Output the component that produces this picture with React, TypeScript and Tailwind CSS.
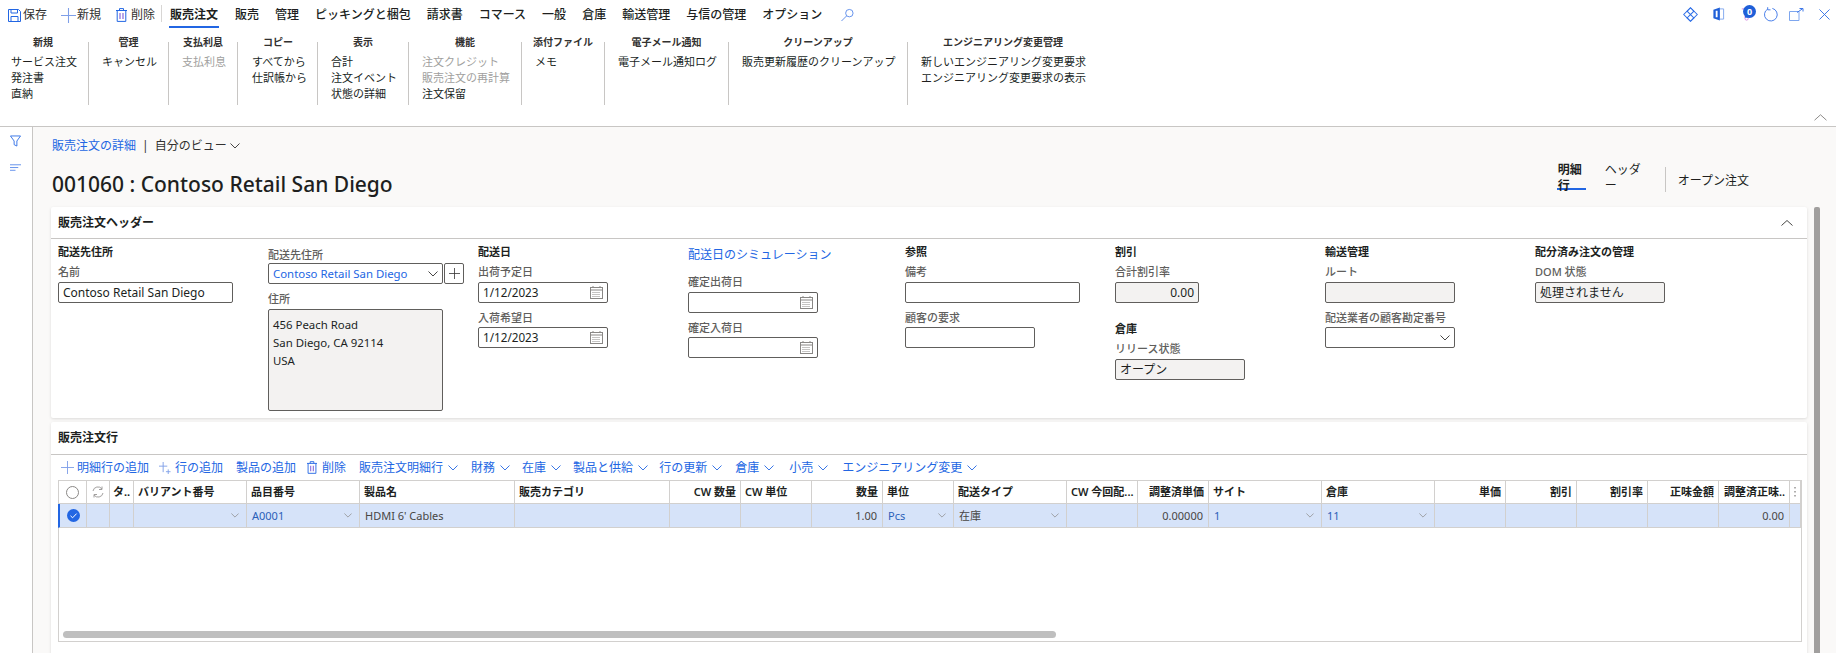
import React from "react";

const BLUE = "#2266e3";

function Chev({ className = "w-[10px] h-[6px]", color = "#323130" }: { className?: string; color?: string }) {
  return (
    <svg viewBox="0 0 10 6" className={className} fill="none">
      <polyline points="0.5,0.5 5,5 9.5,0.5" stroke={color} strokeWidth="0.9" />
    </svg>
  );
}

function Plus({ className, color = "#7f9fe8" }: { className: string; color?: string }) {
  return (
    <svg viewBox="0 0 14 14" className={className} fill="none">
      <path d="M7 0V14M0 7H14" stroke={color} strokeWidth="1" />
    </svg>
  );
}

function Trash({ className }: { className: string }) {
  return (
    <svg viewBox="0 0 11 14" className={className} fill="none" stroke={BLUE} strokeWidth="1">
      <path d="M0 2.5H11M3.5 2.5V.6H7.5V2.5M1.2 2.5V13.4H9.8V2.5" />
      <path d="M4 5V11M7 5V11" stroke="#9a7fe0" strokeWidth="1.4" />
    </svg>
  );
}

function Calendar() {
  return (
    <svg viewBox="0 0 13 13" className="w-[13px] h-[13px] shrink-0" fill="none" stroke="#8a8886" strokeWidth="1">
      <rect x="0.5" y="1.5" width="12" height="11" />
      <path d="M0.5 4H12.5M3 0V2M10 0V2" />
      <path d="M2.5 6.5H10.5M2.5 8.5H10.5M2.5 10.5H10.5" strokeDasharray="1 1" />
    </svg>
  );
}

const tabs = ["販売", "管理", "ピッキングと梱包", "請求書", "コマース", "一般", "倉庫", "輸送管理", "与信の管理", "オプション"];

function TopBar() {
  return (
    <div className="h-[31px] flex items-start text-[12px] leading-4 text-[#201f1e]">
      <div className="flex items-center h-[31px] pb-[1px] pl-[8px] w-[161px] text-[#323130]">
        <svg viewBox="0 0 13 13" className="w-[13px] h-[13px]" fill="none" stroke={BLUE} strokeWidth="1">
          <path d="M.5.5H10.5L12.5 2.5V12.5H.5Z" />
          <path d="M3 .5V4H9.5V.5M3 12.5V7.5H10V12.5" />
        </svg>
        <span className="ml-[2px]">保存</span>
        <Plus className="w-[15px] h-[15px] ml-[14px]" />
        <span className="ml-[1px]">新規</span>
        <Trash className="w-[11px] h-[14px] ml-[15px]" />
        <span className="ml-[4px]">削除</span>
      </div>
      <div className="w-px h-[17px] mt-[5px] bg-[#d8d6d4]" />
      <div className="flex ml-[7px] gap-4 font-medium">
        <div className="h-[28px] w-[50px] px-px pt-[7px] border-b-2 border-[#2266e3] font-semibold">販売注文</div>
        {tabs.map((t) => (
          <div key={t} className="pt-[7px]">{t}</div>
        ))}
      </div>
      <svg viewBox="0 0 14 14" className="w-[13px] h-[14px] ml-[19px] mt-[8px]" fill="none" stroke="#5b8bea" strokeWidth="1">
        <circle cx="9" cy="5" r="4" />
        <path d="M6 8L.5 13.5" />
      </svg>
      <div className="ml-auto flex items-center h-[28px] mr-[6px]">
        <svg viewBox="0 0 16 16" className="w-[15px] h-[15px]" fill="none" stroke="#2f6fe6" strokeWidth="1.1">
          <path d="M8 .8L15.2 8L8 15.2L.8 8Z" />
          <path d="M8 .8L4.4 4.4L11.6 11.6L8 15.2M8 .8L11.6 4.4L4.4 11.6L8 15.2" />
        </svg>
        <svg viewBox="0 0 14 16" className="w-[13px] h-[16px] ml-[14px]" fill="none">
          <path d="M8.5 1L1.5 3.5V12.5L8.5 15Z" fill="#1f5fd8" />
          <path d="M5 4.5V11.5" stroke="#fff" strokeWidth="2" />
          <path d="M8.5 2.5H12.5V13.5H8.5" stroke="#7ea6ee" strokeWidth="1" />
        </svg>
        <div className="relative w-[15px] h-[18px] ml-[16px]">
          <svg viewBox="0 0 10 16" className="w-[8px] h-[15px] mt-[2px]" fill="none">
            <path d="M1 1H9V13A2 2 0 0 1 5 13V9" stroke="#d48ae0" strokeWidth="1.2" />
            <path d="M5 1H9V12H5Z" fill="#2266e3" />
          </svg>
          <span className="absolute top-0 left-[2px] w-[13px] h-[13px] rounded-full bg-[#1f5fd8] text-white text-[9px] leading-[13px] text-center font-bold">0</span>
        </div>
        <svg viewBox="0 0 16 16" className="w-[15px] h-[15px] ml-[7px]" fill="none" stroke="#3f78e8" strokeWidth="1">
          <path d="M5 2.2A6.8 6.8 0 1 0 10 1.5M5 .2V3H8" />
        </svg>
        <svg viewBox="0 0 15 13" className="w-[15px] h-[13px] ml-[11px]" fill="none" stroke="#3f78e8" strokeWidth="1">
          <path d="M.5 3.5H10V12.5H.5Z" stroke="#7ea6ee" />
          <path d="M8 4.5L13.5 .8M10.5 .5H14V3.5" />
        </svg>
        <svg viewBox="0 0 12 12" className="w-[11px] h-[11px] ml-[15px]" fill="none" stroke="#2f6fe6" strokeWidth="1">
          <path d="M.5.5L11.5 11.5M11.5.5L.5 11.5" />
        </svg>
      </div>
    </div>
  );
}

type Group = { head: string; cls: string; items: { t: string; off?: boolean }[] };

const groups: Group[] = [
  { head: "新規", cls: "w-[89px] pl-[11px] border-r", items: [{ t: "サービス注文" }, { t: "発注書" }, { t: "直納" }] },
  { head: "管理", cls: "w-[80px] pl-[13px] border-r", items: [{ t: "キャンセル" }] },
  { head: "支払利息", cls: "w-[69px] pl-[13px] border-r", items: [{ t: "支払利息", off: true }] },
  { head: "コピー", cls: "w-[80px] pl-[14px] border-r", items: [{ t: "すべてから" }, { t: "仕訳帳から" }] },
  { head: "表示", cls: "w-[91px] pl-[13px] border-r", items: [{ t: "合計" }, { t: "注文イベント" }, { t: "状態の詳細" }] },
  { head: "機能", cls: "w-[113px] pl-[13px] border-r", items: [{ t: "注文クレジット", off: true }, { t: "販売注文の再計算", off: true }, { t: "注文保留" }] },
  { head: "添付ファイル", cls: "w-[83px] pl-[13px] border-r", items: [{ t: "メモ" }] },
  { head: "電子メール通知", cls: "w-[124px] pl-[13px] border-r", items: [{ t: "電子メール通知ログ" }] },
  { head: "クリーンアップ", cls: "w-[179px] pl-[13px] border-r", items: [{ t: "販売更新履歴のクリーンアップ" }] },
  { head: "エンジニアリング変更管理", cls: "w-[190px] pl-[13px]", items: [{ t: "新しいエンジニアリング変更要求" }, { t: "エンジニアリング変更要求の表示" }] },
];

function Ribbon() {
  return (
    <div className="h-[96px] border-b border-[#c8c6c4] flex pt-[11px] relative">
      {groups.map((g) => (
        <div key={g.head} className={"h-[63px] border-[#c8c6c4] " + g.cls}>
          <div className="-mt-[6px] -ml-[13px] h-[12px] leading-[12px] text-center text-[10px] font-bold text-[#323130]">{g.head}</div>
          <div className="mt-[6px] text-[11px] leading-4">
            {g.items.map((i) => (
              <div key={i.t} className={i.off ? "text-[#a19f9e] whitespace-nowrap" : "text-[#201f1e] whitespace-nowrap"}>{i.t}</div>
            ))}
          </div>
        </div>
      ))}
      <svg viewBox="0 0 12 6" className="absolute right-[9px] bottom-[5px] w-[13px] h-[7px]" fill="none">
        <polyline points="0.5,5.5 6,0.5 11.5,5.5" stroke="#8a8886" strokeWidth="0.9" />
      </svg>
    </div>
  );
}

function Sidebar() {
  return (
    <div className="w-[33px] shrink-0 bg-white border-r border-[#c8c6c4] flex flex-col items-center pt-[8px] pr-[2px]">
      <svg viewBox="0 0 12 12" className="w-[11px] h-[12px]" fill="none" stroke="#2f6fe6" strokeWidth="1">
        <path d="M.5.5H11.5L7.5 6V11.5L4.5 10V6Z" />
      </svg>
      <svg viewBox="0 0 12 8" className="w-[11px] h-[8px] mt-[17px]" fill="none" stroke="#5b8bea" strokeWidth="1">
        <path d="M0 .5H12M0 3.5H9M0 6.5H6" />
      </svg>
    </div>
  );
}

function Heading({ children, cls = "" }: { children: React.ReactNode; cls?: string }) {
  return <div className={"h-4 leading-4 text-[11px] font-semibold text-[#201f1e] whitespace-nowrap " + cls}>{children}</div>;
}
function Label({ children, cls = "" }: { children: React.ReactNode; cls?: string }) {
  return <div className={"h-4 leading-4 text-[11px] font-medium text-[#605e5c] whitespace-nowrap " + cls}>{children}</div>;
}
function Box({ w, gray, children, cls = "" }: { w: string; gray?: boolean; children?: React.ReactNode; cls?: string }) {
  return (
    <div className={w + " h-[21px] border border-[#605e5c] rounded-[2px] flex items-center px-[4px] text-[12px] text-[#201f1e] " + (gray ? "bg-[#f3f2f1] " : "bg-white ") + cls}>
      {children}
    </div>
  );
}

function HeaderCard() {
  return (
    <div className="h-[211px] bg-white rounded-[2px] shadow-[0_1px_3px_rgba(0,0,0,0.12)]">
      <div className="h-[32px] border-b border-[#c8c6c4] flex items-center justify-between pl-[7px] pr-[14px]">
        <span className="text-[12px] font-semibold text-[#201f1e]">販売注文ヘッダー</span>
        <svg viewBox="0 0 12 6" className="w-[12px] h-[6px]" fill="none">
          <polyline points="0.5,5.5 6,0.5 11.5,5.5" stroke="#323130" strokeWidth="0.9" />
        </svg>
      </div>
      <div className="flex pl-[7px] pt-[5px]">
        <div className="w-[210px]">
          <Heading>配送先住所</Heading>
          <Label cls="mt-1">名前</Label>
          <Box w="w-[175px]" cls="mt-[2px] text-[11.4px]">Contoso Retail San Diego</Box>
        </div>
        <div className="w-[210px] pt-[3px]">
          <Label>配送先住所</Label>
          <div className="flex gap-px">
            <Box w="w-[175px]" cls="justify-between">
              <span className="text-[11.4px] text-[#2266e3]">Contoso Retail San Diego</span>
              <Chev />
            </Box>
            <div className="w-[20px] h-[21px] border border-[#605e5c] rounded-[2px] flex items-center justify-center">
              <Plus className="w-[11px] h-[11px]" color="#323130" />
            </div>
          </div>
          <Label cls="mt-[7px]">住所</Label>
          <div className="mt-[2px] w-[175px] h-[102px] border border-[#605e5c] rounded-[2px] bg-[#f3f2f1] pl-[4px] pt-[6px] text-[11.4px] leading-[18px] text-[#201f1e]">
            <div>456 Peach Road</div>
            <div>San Diego, CA 92114</div>
            <div>USA</div>
          </div>
        </div>
        <div className="w-[210px]">
          <Heading>配送日</Heading>
          <Label cls="mt-1">出荷予定日</Label>
          <Box w="w-[130px]" cls="mt-[2px] justify-between"><span className="text-[11.7px]">1/12/2023</span><Calendar /></Box>
          <Label cls="mt-[7px]">入荷希望日</Label>
          <Box w="w-[130px]" cls="mt-px justify-between"><span className="text-[11.7px]">1/12/2023</span><Calendar /></Box>
        </div>
        <div className="w-[217px]">
          <div className="pt-[3px] h-[19px] leading-4 text-[12px] text-[#2266e3] whitespace-nowrap">配送日のシミュレーション</div>
          <Label cls="mt-[11px]">確定出荷日</Label>
          <Box w="w-[130px]" cls="mt-[2px] justify-end"><Calendar /></Box>
          <Label cls="mt-[7px]">確定入荷日</Label>
          <Box w="w-[130px]" cls="mt-px justify-end"><Calendar /></Box>
        </div>
        <div className="w-[210px]">
          <Heading>参照</Heading>
          <Label cls="mt-1">備考</Label>
          <Box w="w-[175px]" cls="mt-[2px]" />
          <Label cls="mt-[7px]">顧客の要求</Label>
          <Box w="w-[130px]" cls="mt-px" />
        </div>
        <div className="w-[210px]">
          <Heading>割引</Heading>
          <Label cls="mt-1">合計割引率</Label>
          <Box w="w-[84px]" gray cls="mt-[2px] justify-end">0.00</Box>
          <Heading cls="mt-[18px]">倉庫</Heading>
          <Label cls="mt-1">リリース状態</Label>
          <Box w="w-[130px]" gray cls="mt-[2px]">オープン</Box>
        </div>
        <div className="w-[210px]">
          <Heading>輸送管理</Heading>
          <Label cls="mt-1">ルート</Label>
          <Box w="w-[130px]" gray cls="mt-[2px]" />
          <Label cls="mt-[7px]">配送業者の顧客勘定番号</Label>
          <Box w="w-[130px]" cls="mt-px justify-end"><Chev /></Box>
        </div>
        <div className="w-[180px]">
          <Heading>配分済み注文の管理</Heading>
          <Label cls="mt-1">DOM 状態</Label>
          <Box w="w-[130px]" gray cls="mt-[2px]">処理されません</Box>
        </div>
      </div>
    </div>
  );
}

function ToolbarDrop({ t, cls }: { t: string; cls: string }) {
  return (
    <div className={"flex items-center " + cls}>
      <span>{t}</span>
      <Chev className="w-[10px] h-[6px] ml-[5px]" color={BLUE} />
    </div>
  );
}

function Toolbar() {
  return (
    <div className="h-[25px] flex items-center pl-[10px] text-[12px] text-[#2266e3] whitespace-nowrap">
      <Plus className="w-[13px] h-[13px]" />
      <span className="ml-[3px]">明細行の追加</span>
      <svg viewBox="0 0 13 13" className="w-[12px] h-[12px] ml-[10px]" fill="none" stroke="#7f9fe8" strokeWidth="1">
        <path d="M4.5 0V11M0 4.5H9M10 8V13M7.5 10.5H12.5" />
      </svg>
      <span className="ml-[4px]">行の追加</span>
      <span className="ml-[13px]">製品の追加</span>
      <Trash className="w-[10px] h-[13px] ml-[11px]" />
      <span className="ml-[5px]">削除</span>
      <ToolbarDrop t="販売注文明細行" cls="ml-[13px]" />
      <ToolbarDrop t="財務" cls="ml-[13px]" />
      <ToolbarDrop t="在庫" cls="ml-[12px]" />
      <ToolbarDrop t="製品と供給" cls="ml-[12px]" />
      <ToolbarDrop t="行の更新" cls="ml-[11px]" />
      <ToolbarDrop t="倉庫" cls="ml-[13px]" />
      <ToolbarDrop t="小売" cls="ml-[15px]" />
      <ToolbarDrop t="エンジニアリング変更" cls="ml-[14px]" />
    </div>
  );
}

type Col = { h: string; right?: boolean; v?: string; link?: boolean; drop?: boolean };
const cols: Col[] = [
  { h: "バリアント番号", drop: true },
  { h: "品目番号", v: "A0001", link: true, drop: true },
  { h: "製品名", v: "HDMI 6' Cables" },
  { h: "販売カテゴリ" },
  { h: "CW 数量", right: true },
  { h: "CW 単位" },
  { h: "数量", right: true, v: "1.00" },
  { h: "単位", v: "Pcs", link: true, drop: true },
  { h: "配送タイプ", v: "在庫", drop: true },
  { h: "CW 今回配..." },
  { h: "調整済単価", right: true, v: "0.00000" },
  { h: "サイト", v: "1", link: true, drop: true },
  { h: "倉庫", v: "11", link: true, drop: true },
  { h: "単価", right: true },
  { h: "割引", right: true },
  { h: "割引率", right: true },
  { h: "正味金額", right: true },
  { h: "調整済正味..", right: true, v: "0.00" },
];

function Grid() {
  const head = "h-[23px] bg-white border-r border-b border-[#d2d0ce] flex items-center";
  const cell = "h-[24px] bg-[#d6e3f9] border-r border-b border-[#d2d0ce] flex items-center";
  return (
    <div className="ml-[7px] w-[1744px] h-[162px] border border-[#d2d0ce] flex flex-col">
      <div className="grid grid-cols-[28px_23px_24px_113px_113px_155px_155px_71px_71px_71px_71px_113px_71px_71px_113px_113px_71px_71px_71px_71px_71px_11px] text-[11px] leading-4">
        <div className={head + " justify-center"}>
          <div className="w-[13px] h-[13px] rounded-full border border-[#8a8886]" />
        </div>
        <div className={head + " justify-center"}>
          <svg viewBox="0 0 12 12" className="w-[12px] h-[12px]" fill="none" stroke="#a19f9e" strokeWidth="1">
            <path d="M1 5A5 5 0 0 1 10 3M11 7A5 5 0 0 1 2 9M10 .5V3.5H7M2 11.5V8.5H5" />
          </svg>
        </div>
        <div className={head + " pl-[3px] font-bold text-[#201f1e]"}>タ..</div>
        {cols.map((c) => (
          <div key={c.h} className={head + " px-[4px] font-semibold text-[#201f1e] whitespace-nowrap overflow-hidden " + (c.right ? "justify-end" : "")}>{c.h}</div>
        ))}
        <div className={head + " justify-center"}>
          <svg viewBox="0 0 2 10" className="w-[2px] h-[10px]"><path d="M1 0V1.5M1 4V5.5M1 8V9.5" stroke="#605e5c" /></svg>
        </div>

        <div className={cell + " justify-center border-l-2 border-l-[#2266e3] -ml-px"}>
          <svg viewBox="0 0 13 13" className="w-[13px] h-[13px]">
            <circle cx="6.5" cy="6.5" r="6.5" fill={BLUE} />
            <path d="M3.5 6.8L5.6 8.8L9.6 4.6" fill="none" stroke="#fff" strokeWidth="1" />
          </svg>
        </div>
        <div className={cell} />
        <div className={cell} />
        {cols.map((c) => (
          <div key={c.h} className={cell + " px-[5px] whitespace-nowrap " + (c.right ? "justify-end " : "justify-between ") + (c.link ? "text-[#2b5fb8]" : "text-[#484644]")}>
            {c.v ? <span>{c.v}</span> : <span />}
            {c.drop ? <Chev className="w-[8px] h-[5px] mr-[2px]" color="#8a8886" /> : null}
          </div>
        ))}
        <div className={cell} />
      </div>
      <div className="mt-auto mb-[3px] ml-[4px] w-[993px] h-[7px] rounded-full bg-[#bfbfbf]" />
    </div>
  );
}

function LinesCard() {
  return (
    <div className="mt-[4px] h-[240px] bg-white rounded-[2px] shadow-[0_1px_3px_rgba(0,0,0,0.12)]">
      <div className="h-[33px] border-b border-[#c8c6c4] flex items-center pl-[7px] text-[12px] font-semibold text-[#201f1e]">販売注文行</div>
      <Toolbar />
      <Grid />
    </div>
  );
}

export default function App() {
  return (
    <div className="w-[1836px] h-[653px] overflow-hidden bg-white font-['Noto_Sans','Noto_Sans_CJK_JP',sans-serif]">
      <TopBar />
      <Ribbon />
      <div className="flex h-[526px]">
        <Sidebar />
        <div className="flex-1 bg-[#faf9f8] pl-[18px] overflow-hidden">
          <div className="flex items-center h-[38px] pb-[1px] pl-px text-[12px]">
            <span className="text-[#2266e3]">販売注文の詳細</span>
            <span className="mx-[6px] text-[#323130]">|</span>
            <span className="text-[#323130]">自分のビュー</span>
            <Chev className="w-[10px] h-[6px] ml-[3px]" />
          </div>
          <div className="h-[42px] flex items-start pl-px">
            <div className="pt-[7px] text-[21px] leading-[24px] font-medium text-[#201f1e] whitespace-nowrap">001060 : Contoso Retail San Diego</div>
            <div className="ml-auto mr-[87px] flex items-start text-[12px] leading-4 text-[#201f1e] -mt-[3px]">
              <div className="w-[28px] h-[26px] pl-px border-b-2 border-[#2266e3] font-semibold box-content">明細<br />行</div>
              <div className="w-[36px] ml-[19px]">ヘッダ<br />ー</div>
              <div className="w-px h-[25px] mt-[5px] ml-[24px] bg-[#c8c6c4]" />
              <div className="ml-[12px] mt-[11px]">オープン注文</div>
            </div>
          </div>
          <div className="flex">
            <div className="w-[1756px]">
              <HeaderCard />
              <LinesCard />
            </div>
            <div className="ml-[7px] w-[6px] h-[446px] bg-[#a19f9e] rounded-t-[2px]" />
          </div>
        </div>
      </div>
    </div>
  );
}
